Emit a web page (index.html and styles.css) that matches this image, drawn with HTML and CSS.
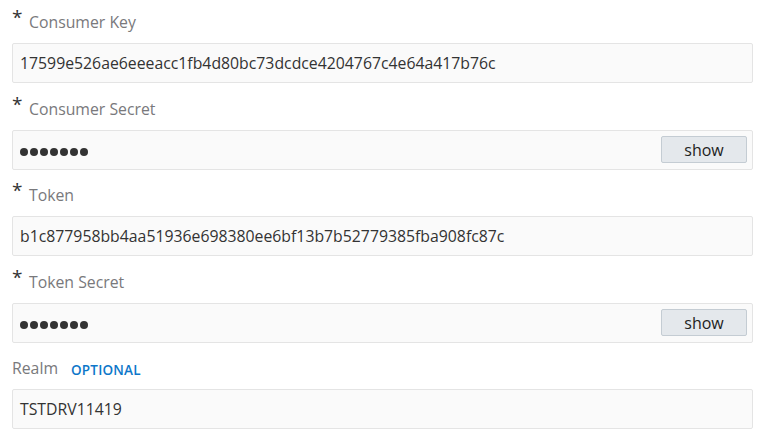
FILE: index.html
```html
<!DOCTYPE html>
<html>
<head>
<meta charset="utf-8">
<link rel="stylesheet" href="styles.css">
</head>
<body>
<form class="form">
  <div class="field">
    <div class="label"><span class="req">*</span><span class="label-text">Consumer Key</span></div>
    <div class="box"><span class="value">17599e526ae6eeeacc1fb4d80bc73dcdce4204767c4e64a417b76c</span></div>
  </div>
  <div class="field">
    <div class="label"><span class="req">*</span><span class="label-text">Consumer Secret</span></div>
    <div class="box"><span class="dots"><i></i><i></i><i></i><i></i><i></i><i></i><i></i></span><button type="button" class="show">show</button></div>
  </div>
  <div class="field">
    <div class="label"><span class="req">*</span><span class="label-text">Token</span></div>
    <div class="box"><span class="value">b1c877958bb4aa51936e698380ee6bf13b7b52779385fba908fc87c</span></div>
  </div>
  <div class="field">
    <div class="label"><span class="req">*</span><span class="label-text">Token Secret</span></div>
    <div class="box"><span class="dots"><i></i><i></i><i></i><i></i><i></i><i></i><i></i></span><button type="button" class="show">show</button></div>
  </div>
  <div class="field">
    <div class="label"><span class="label-text">Realm</span><span class="optional">OPTIONAL</span></div>
    <div class="box"><span class="value">TSTDRV11419</span></div>
  </div>
</form>
</body>
</html>
```
FILE: styles.css
```css
html, body {
  margin: 0;
  padding: 0;
  background: #ffffff;
}
body {
  font-family: "Open Sans", "Noto Sans", "Liberation Sans", sans-serif;
  color: #333333;
}
.form {
  padding: 0 17px 0 12px;
  display: flex;
  flex-direction: column;
  gap: 3.5px;
}
.field {
  display: flex;
  flex-direction: column;
}
.label {
  height: 43px;
  display: flex;
  align-items: center;
  padding-top: 1px;
  box-sizing: border-box;
}
.req {
  width: 17px;
  font-size: 19px;
  line-height: 1;
  color: #333333;
  margin-top: -9px;
}
.label-text {
  font-size: 15.8px;
  color: #79797c;
}
.optional {
  margin-left: 13px;
  margin-top: 3px;
  font-size: 13.5px;
  font-weight: 600;
  color: #0d77c9;
  letter-spacing: 0.2px;
}
.box {
  height: 40px;
  box-sizing: border-box;
  border: 1px solid #e4e4e4;
  border-radius: 2px;
  background: #fafafa;
  display: flex;
  align-items: center;
  padding: 0 5px 0 7px;
}
.value {
  font-size: 15.8px;
  color: #333333;
  flex: 1;
}
.dots {
  flex: 1;
  display: flex;
  gap: 2px;
  margin-top: 4px;
}
.dots i {
  width: 8px;
  height: 8px;
  border-radius: 50%;
  background: #333333;
}
.show {
  width: 86px;
  height: 27px;
  font-family: inherit;
  font-size: 16px;
  color: #222222;
  background: #e4e8ec;
  border: 1px solid #c4ccd3;
  border-radius: 2px;
  padding: 0;
}
```
